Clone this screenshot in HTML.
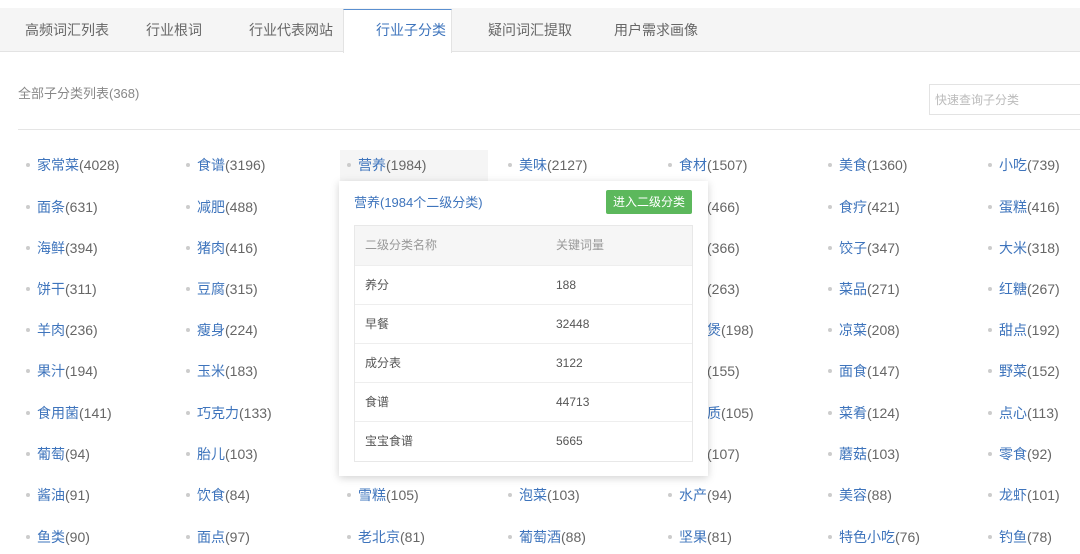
<!DOCTYPE html><html><head><meta charset="utf-8"><style>
*{margin:0;padding:0;box-sizing:border-box}
body{width:1080px;height:554px;overflow:hidden;background:#fff;font-family:"Liberation Sans","Noto Sans CJK SC",sans-serif;position:relative}
.tabbar{position:absolute;left:0;top:8px;width:1080px;height:44px;background:#f5f5f5;border-bottom:1px solid #e3e3e3}
.tab{position:absolute;top:22px;font-size:14px;color:#666;line-height:16px}
.act{position:absolute;left:343px;top:9px;width:109px;height:44px;background:#fff;border-top:1px solid #5a8fd0;border-left:1px solid #e3e3e3;border-right:1px solid #e3e3e3}
.t{position:absolute;font-size:14px;line-height:16px;white-space:nowrap}
.c{position:absolute;font-size:14px;line-height:16px;white-space:nowrap;color:#666}
.c b{font-weight:normal;color:#3e74bc}
.c:before{content:"";position:absolute;left:-11px;top:6px;width:4px;height:4px;background:#ccc;border-radius:50%}
.pop{position:absolute;left:339px;top:181px;width:369px;height:295px;background:#fff;box-shadow:0 2px 8px rgba(0,0,0,.18)}
.tbl{position:absolute;left:15px;top:44px;width:339px;border:1px solid #e8e8e8}
.row{height:39px;border-top:1px solid #eee;position:relative;font-size:12px;color:#555}
.row span{position:absolute;top:12px;line-height:14px}
</style></head><body>
<div class="tabbar"></div>
<div class="act"></div>
<div class="tab" style="left:25px">高频词汇列表</div>
<div class="tab" style="left:146px">行业根词</div>
<div class="tab" style="left:249px">行业代表网站</div>
<div class="tab" style="left:376px;color:#3e74bc">行业子分类</div>
<div class="tab" style="left:488px">疑问词汇提取</div>
<div class="tab" style="left:614px">用户需求画像</div>
<div class="t" style="left:18px;top:86px;color:#888;font-size:13px">全部子分类列表(368)</div>
<div style="position:absolute;left:929px;top:84px;width:160px;height:31px;border:1px solid #e3e3e3"></div>
<div class="t" style="left:935px;top:92px;font-size:12px;color:#bbb">快速查询子分类</div>
<div style="position:absolute;left:18px;top:129px;width:1062px;height:1px;background:#e5e5e5"></div>
<div style="position:absolute;left:340px;top:150px;width:148px;height:31px;background:#f5f5f5"></div>
<div class="c" style="left:37px;top:157px"><b>家常菜</b>(4028)</div><div class="c" style="left:197px;top:157px"><b>食谱</b>(3196)</div><div class="c" style="left:358px;top:157px"><b>营养</b>(1984)</div><div class="c" style="left:519px;top:157px"><b>美味</b>(2127)</div><div class="c" style="left:679px;top:157px"><b>食材</b>(1507)</div><div class="c" style="left:839px;top:157px"><b>美食</b>(1360)</div><div class="c" style="left:999px;top:157px"><b>小吃</b>(739)</div>
<div class="c" style="left:37px;top:199px"><b>面条</b>(631)</div><div class="c" style="left:197px;top:199px"><b>减肥</b>(488)</div><div class="c" style="left:679px;top:199px"><b>蔬菜</b>(466)</div><div class="c" style="left:839px;top:199px"><b>食疗</b>(421)</div><div class="c" style="left:999px;top:199px"><b>蛋糕</b>(416)</div>
<div class="c" style="left:37px;top:240px"><b>海鲜</b>(394)</div><div class="c" style="left:197px;top:240px"><b>猪肉</b>(416)</div><div class="c" style="left:679px;top:240px"><b>鸡肉</b>(366)</div><div class="c" style="left:839px;top:240px"><b>饺子</b>(347)</div><div class="c" style="left:999px;top:240px"><b>大米</b>(318)</div>
<div class="c" style="left:37px;top:281px"><b>饼干</b>(311)</div><div class="c" style="left:197px;top:281px"><b>豆腐</b>(315)</div><div class="c" style="left:679px;top:281px"><b>鸡蛋</b>(263)</div><div class="c" style="left:839px;top:281px"><b>菜品</b>(271)</div><div class="c" style="left:999px;top:281px"><b>红糖</b>(267)</div>
<div class="c" style="left:37px;top:322px"><b>羊肉</b>(236)</div><div class="c" style="left:197px;top:322px"><b>瘦身</b>(224)</div><div class="c" style="left:679px;top:322px"><b>砂锅煲</b>(198)</div><div class="c" style="left:839px;top:322px"><b>凉菜</b>(208)</div><div class="c" style="left:999px;top:322px"><b>甜点</b>(192)</div>
<div class="c" style="left:37px;top:363px"><b>果汁</b>(194)</div><div class="c" style="left:197px;top:363px"><b>玉米</b>(183)</div><div class="c" style="left:679px;top:363px"><b>牛肉</b>(155)</div><div class="c" style="left:839px;top:363px"><b>面食</b>(147)</div><div class="c" style="left:999px;top:363px"><b>野菜</b>(152)</div>
<div class="c" style="left:37px;top:405px"><b>食用菌</b>(141)</div><div class="c" style="left:197px;top:405px"><b>巧克力</b>(133)</div><div class="c" style="left:679px;top:405px"><b>蛋白质</b>(105)</div><div class="c" style="left:839px;top:405px"><b>菜肴</b>(124)</div><div class="c" style="left:999px;top:405px"><b>点心</b>(113)</div>
<div class="c" style="left:37px;top:446px"><b>葡萄</b>(94)</div><div class="c" style="left:197px;top:446px"><b>胎儿</b>(103)</div><div class="c" style="left:679px;top:446px"><b>面包</b>(107)</div><div class="c" style="left:839px;top:446px"><b>蘑菇</b>(103)</div><div class="c" style="left:999px;top:446px"><b>零食</b>(92)</div>
<div class="c" style="left:37px;top:487px"><b>酱油</b>(91)</div><div class="c" style="left:197px;top:487px"><b>饮食</b>(84)</div><div class="c" style="left:358px;top:487px"><b>雪糕</b>(105)</div><div class="c" style="left:519px;top:487px"><b>泡菜</b>(103)</div><div class="c" style="left:679px;top:487px"><b>水产</b>(94)</div><div class="c" style="left:839px;top:487px"><b>美容</b>(88)</div><div class="c" style="left:999px;top:487px"><b>龙虾</b>(101)</div>
<div class="c" style="left:37px;top:529px"><b>鱼类</b>(90)</div><div class="c" style="left:197px;top:529px"><b>面点</b>(97)</div><div class="c" style="left:358px;top:529px"><b>老北京</b>(81)</div><div class="c" style="left:519px;top:529px"><b>葡萄酒</b>(88)</div><div class="c" style="left:679px;top:529px"><b>坚果</b>(81)</div><div class="c" style="left:839px;top:529px"><b>特色小吃</b>(76)</div><div class="c" style="left:999px;top:529px"><b>钓鱼</b>(78)</div>
<div class="pop">
<div class="t" style="left:15px;top:14px;font-size:13px;color:#3e74bc">营养(1984个二级分类)</div>
<div style="position:absolute;left:267px;top:9px;width:86px;height:24px;background:#5cb85c;border-radius:2px;color:#fff;font-size:12px;line-height:24px;text-align:center">进入二级分类</div>
<div class="tbl">
<div class="row" style="background:#f6f6f6;border-top:none;color:#999"><span style="left:10px">二级分类名称</span><span style="left:201px">关键词量</span></div>
<div class="row"><span style="left:10px">养分</span><span style="left:201px">188</span></div>
<div class="row"><span style="left:10px">早餐</span><span style="left:201px">32448</span></div>
<div class="row"><span style="left:10px">成分表</span><span style="left:201px">3122</span></div>
<div class="row"><span style="left:10px">食谱</span><span style="left:201px">44713</span></div>
<div class="row" style="height:40px"><span style="left:10px">宝宝食谱</span><span style="left:201px">5665</span></div>
</div>
</div>
</body></html>
